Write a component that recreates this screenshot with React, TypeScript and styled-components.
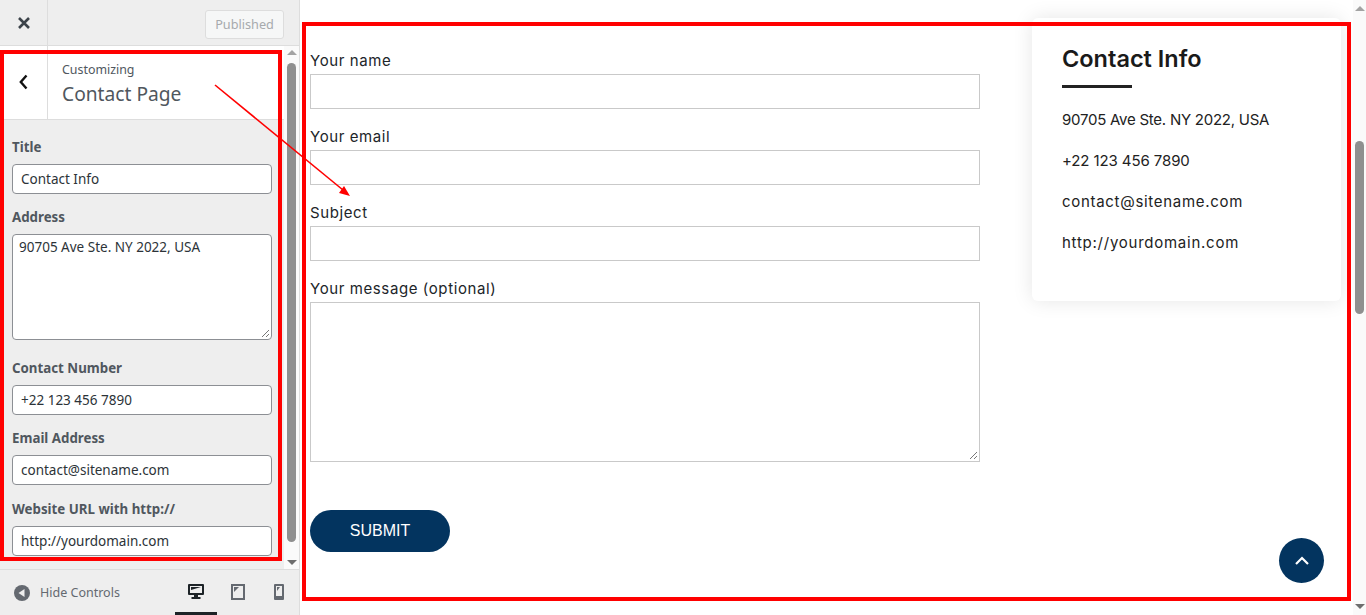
import React from 'react';
import styled, { createGlobalStyle } from 'styled-components';

const GlobalStyle = createGlobalStyle`
  html, body {
    margin: 0;
    padding: 0;
    height: 100%;
    overflow: hidden;
    background: #fff;
  }
  * {
    box-sizing: border-box;
  }
`;

const uiFont = `"Noto Sans", "Liberation Sans", sans-serif`;
const pageFont = `Inter, "Liberation Sans", sans-serif`;
const navy = '#03345f';

const Page = styled.div`
  position: relative;
  display: grid;
  grid-template-columns: 300px 1fr;
  width: 1366px;
  height: 615px;
  overflow: hidden;
`;

const Sidebar = styled.aside`
  display: flex;
  flex-direction: column;
  height: 615px;
  background: #eee;
  border-right: 1px solid #ddd;
  font-family: ${uiFont};
`;

const TopBar = styled.div`
  display: flex;
  align-items: center;
  justify-content: space-between;
  flex: none;
  height: 46px;
  padding-right: 15px;
  border-bottom: 1px solid #ddd;
`;

const IconCell = styled.div<{ $bg?: string; $lift?: number }>`
  display: flex;
  align-items: center;
  justify-content: center;
  flex: none;
  width: 48px;
  height: 100%;
  padding-bottom: ${(p) => p.$lift ?? 0}px;
  border-right: 1px solid #ddd;
  background: ${(p) => p.$bg ?? 'transparent'};
`;

const PublishedButton = styled.div`
  width: 79px;
  height: 29px;
  margin-top: 3px;
  border: 1px solid #ddd;
  border-radius: 3px;
  background: #f6f7f7;
  color: #a7aaad;
  font-size: 12.7px;
  line-height: 27px;
  text-align: center;
`;

const SidebarBody = styled.div`
  display: flex;
  flex: none;
  height: 523px;
`;

const Pane = styled.div`
  flex: 1;
  min-width: 0;
`;

const SectionHead = styled.div`
  display: flex;
  height: 74px;
  background: #fff;
  border-bottom: 1px solid #ddd;
`;

const SectionTitles = styled.div`
  padding: 14.5px 0 0 14px;
  color: #50575e;
`;

const Eyebrow = styled.div`
  font-size: 12.4px;
  line-height: 17px;
`;

const SectionName = styled.div`
  margin-top: 2.5px;
  font-size: 19.2px;
  line-height: 28px;
`;

const Controls = styled.div`
  display: flex;
  flex-direction: column;
  padding: 18px 12px 0;
`;

const Field = styled.div<{ $gap?: number }>`
  margin-bottom: ${(p) => p.$gap ?? 14.2}px;
`;

const FieldLabel = styled.div`
  margin-bottom: 7px;
  color: #50575e;
  font-size: 13.3px;
  font-weight: 700;
  line-height: 19px;
`;

const TextBox = styled.div<{ $tall?: boolean }>`
  position: relative;
  width: 260px;
  height: ${(p) => (p.$tall ? 106 : 30)}px;
  padding: ${(p) => (p.$tall ? '2px 6px' : '0 8px')};
  border: 1px solid #8c8f94;
  border-radius: 4px;
  background: #fff;
  color: #2c3338;
  font-size: 13.5px;
  line-height: ${(p) => (p.$tall ? 20 : 29)}px;
  white-space: nowrap;
`;

const ResizeGrip = styled.svg`
  position: absolute;
  right: 1px;
  bottom: 1px;
`;

const Track = styled.div<{ $width: number; $bg: string }>`
  display: flex;
  flex-direction: column;
  align-items: center;
  flex: none;
  width: ${(p) => p.$width}px;
  background: ${(p) => p.$bg};
`;

const ArrowUp = styled.div<{ $top: number }>`
  flex: none;
  width: 0;
  height: 0;
  margin-top: ${(p) => p.$top}px;
  border-left: 5px solid transparent;
  border-right: 5px solid transparent;
  border-bottom: 5px solid #a3a3a3;
`;

const ArrowDown = styled.div<{ $bottom: number }>`
  flex: none;
  width: 0;
  height: 0;
  margin-top: auto;
  margin-bottom: ${(p) => p.$bottom}px;
  border-left: 5px solid transparent;
  border-right: 5px solid transparent;
  border-top: 5px solid #6e6e6e;
`;

const Thumb = styled.div<{ $top: number; $height: number }>`
  flex: none;
  width: 9px;
  height: ${(p) => p.$height}px;
  margin-top: ${(p) => p.$top}px;
  border-radius: 5px;
  background: #8f8f8f;
`;

const BottomBar = styled.div`
  display: flex;
  align-items: center;
  flex: 1;
  padding-left: 14px;
  border-top: 1px solid #ddd;
`;

const HideLabel = styled.span`
  margin-left: 10px;
  color: #646970;
  font-size: 12.5px;
`;

const Devices = styled.div`
  display: flex;
  align-self: stretch;
  margin-left: auto;
`;

const DeviceTab = styled.div<{ $active?: boolean }>`
  display: flex;
  align-items: center;
  justify-content: center;
  width: ${(p) => (p.$active ? 42 : 41)}px;
  height: 100%;
  padding-top: 1px;
  border-bottom: 3px solid ${(p) => (p.$active ? '#1d2327' : 'transparent')};
  color: ${(p) => (p.$active ? '#1d2327' : '#646970')};
`;

const Preview = styled.main`
  display: flex;
  height: 615px;
  background: #fff;
  font-family: ${pageFont};
  color: #212529;
`;

const PreviewBody = styled.div`
  display: flex;
  flex: 1;
  min-width: 0;
  padding-left: 10px;
`;

const ContactForm = styled.form`
  flex: none;
  width: 670px;
  padding-top: 51px;
`;

const FormLabel = styled.div`
  margin-bottom: 4px;
  font-size: 15px;
  line-height: 19px;
  letter-spacing: 0.6px;
`;

const FormInput = styled.div<{ $height?: number }>`
  position: relative;
  height: ${(p) => p.$height ?? 35}px;
  margin-bottom: 18px;
  border: 1px solid #c9c9c9;
  background: #fff;
`;

const SubmitButton = styled.button`
  display: block;
  width: 140px;
  height: 42px;
  margin-top: 48px;
  padding: 0;
  border: none;
  border-radius: 21px;
  background: ${navy};
  color: #fff;
  font-family: "Liberation Sans", Arial, sans-serif;
  font-size: 16px;
`;

const InfoCard = styled.section`
  flex: none;
  width: 309px;
  height: 283px;
  margin: 18px 0 0 52px;
  padding: 26px 30px 0;
  border-radius: 6px;
  background: #fff;
  box-shadow: 0 0 20px rgba(0, 0, 0, 0.1);
`;

const CardTitle = styled.h3`
  margin: 0;
  color: #1a1a1a;
  font-size: 23.5px;
  font-weight: 600;
  line-height: 30px;
`;

const CardRule = styled.div`
  width: 70px;
  height: 3px;
  margin: 11px 0 22px;
  background: #222;
`;

const CardLine = styled.p<{ $spacing: number }>`
  margin: 0 0 21px;
  color: #222;
  font-size: 15px;
  line-height: 20px;
  letter-spacing: ${(p) => p.$spacing}px;
`;

const ToTop = styled.div`
  position: absolute;
  left: 1279px;
  top: 538px;
  display: flex;
  align-items: center;
  justify-content: center;
  width: 45px;
  height: 45px;
  border-radius: 50%;
  background: ${navy};
`;

const RedBox = styled.div<{ $x: number; $y: number; $w: number; $h: number }>`
  position: absolute;
  left: ${(p) => p.$x}px;
  top: ${(p) => p.$y}px;
  width: ${(p) => p.$w}px;
  height: ${(p) => p.$h}px;
  border: 4px solid #f00;
  pointer-events: none;
`;

const ArrowOverlay = styled.svg`
  position: absolute;
  left: 0;
  top: 0;
  pointer-events: none;
`;

const CloseIcon = () => (
  <svg width="14" height="14" viewBox="0 0 14 14">
    <path d="M2 2l10 10M12 2L2 12" stroke="#3c434a" strokeWidth="2.6" fill="none" />
  </svg>
);

const BackIcon = () => (
  <svg width="9" height="16" viewBox="0 0 9 16">
    <path d="M7.5 1.5L1.8 8l5.7 6.5" stroke="#111" strokeWidth="2.4" fill="none" />
  </svg>
);

const HideIcon = () => (
  <svg width="16" height="16" viewBox="0 0 16 16">
    <circle cx="8" cy="8" r="8" fill="#646970" />
    <path d="M10.5 4v8L4.5 8z" fill="#eee" />
  </svg>
);

const DesktopIcon = () => (
  <svg width="16" height="16" viewBox="0 0 16 16">
    <path
      fillRule="evenodd"
      d="M1 0h14a1 1 0 0 1 1 1v9a1 1 0 0 1-1 1H10v2h2.5v2h-9v-2H6v-2H1a1 1 0 0 1-1-1V1a1 1 0 0 1 1-1zM2 2v7h12V2z"
      fill="currentColor"
    />
    <path d="M3 3h10L3 6z" fill="currentColor" />
  </svg>
);

const TabletIcon = () => (
  <svg width="14" height="16" viewBox="0 0 14 16">
    <path fillRule="evenodd" d="M0 0h14v16H0zM2 2v12h10V2z" fill="currentColor" />
    <path d="M3 3h5L3 8z" fill="currentColor" />
  </svg>
);

const MobileIcon = () => (
  <svg width="10" height="16" viewBox="0 0 10 16">
    <path
      fillRule="evenodd"
      d="M1 0h8a1 1 0 0 1 1 1v14a1 1 0 0 1-1 1H1a1 1 0 0 1-1-1V1a1 1 0 0 1 1-1zM2 2v10h6V2z"
      fill="currentColor"
    />
    <path d="M3 3h3L3 7z" fill="currentColor" />
  </svg>
);

const contactLines = [
  { text: '90705 Ave Ste. NY 2022, USA', spacing: -0.25 },
  { text: '+22 123 456 7890', spacing: -0.1 },
  { text: 'contact@sitename.com', spacing: 0.7 },
  { text: 'http://yourdomain.com', spacing: 0.75 },
];

export default function App() {
  return (
    <>
      <GlobalStyle />
      <Page>
        <Sidebar>
          <TopBar>
            <IconCell>
              <CloseIcon />
            </IconCell>
            <PublishedButton>Published</PublishedButton>
          </TopBar>
          <SidebarBody>
            <Pane>
              <SectionHead>
                <IconCell $bg="#fff" $lift={1}>
                  <BackIcon />
                </IconCell>
                <SectionTitles>
                  <Eyebrow>Customizing</Eyebrow>
                  <SectionName>Contact Page</SectionName>
                </SectionTitles>
              </SectionHead>
              <Controls>
                <Field>
                  <FieldLabel>Title</FieldLabel>
                  <TextBox>Contact Info</TextBox>
                </Field>
                <Field $gap={19}>
                  <FieldLabel>Address</FieldLabel>
                  <TextBox $tall>
                    90705 Ave Ste. NY 2022, USA
                    <ResizeGrip width="9" height="9" viewBox="0 0 9 9">
                      <path d="M1 8l7-7M5 8l3-3" stroke="#777" fill="none" />
                    </ResizeGrip>
                  </TextBox>
                </Field>
                <Field>
                  <FieldLabel>Contact Number</FieldLabel>
                  <TextBox>+22 123 456 7890</TextBox>
                </Field>
                <Field>
                  <FieldLabel>Email Address</FieldLabel>
                  <TextBox>contact@sitename.com</TextBox>
                </Field>
                <Field $gap={0}>
                  <FieldLabel>Website URL with http://</FieldLabel>
                  <TextBox>http://yourdomain.com</TextBox>
                </Field>
              </Controls>
            </Pane>
            <Track $width={15} $bg="#fafafa">
              <ArrowUp $top={4} />
              <Thumb $top={8} $height={479} />
              <ArrowDown $bottom={4} />
            </Track>
          </SidebarBody>
          <BottomBar>
            <HideIcon />
            <HideLabel>Hide Controls</HideLabel>
            <Devices>
              <DeviceTab $active>
                <DesktopIcon />
              </DeviceTab>
              <DeviceTab>
                <TabletIcon />
              </DeviceTab>
              <DeviceTab>
                <MobileIcon />
              </DeviceTab>
            </Devices>
          </BottomBar>
        </Sidebar>
        <Preview>
          <PreviewBody>
            <ContactForm>
              <FormLabel>Your name</FormLabel>
              <FormInput />
              <FormLabel>Your email</FormLabel>
              <FormInput />
              <FormLabel>Subject</FormLabel>
              <FormInput />
              <FormLabel>Your message (optional)</FormLabel>
              <FormInput $height={160}>
                <ResizeGrip width="9" height="9" viewBox="0 0 9 9">
                  <path d="M1 8l7-7M5 8l3-3" stroke="#777" fill="none" />
                </ResizeGrip>
              </FormInput>
              <SubmitButton type="button">SUBMIT</SubmitButton>
            </ContactForm>
            <InfoCard>
              <CardTitle>Contact Info</CardTitle>
              <CardRule />
              {contactLines.map((line) => (
                <CardLine key={line.text} $spacing={line.spacing}>
                  {line.text}
                </CardLine>
              ))}
            </InfoCard>
          </PreviewBody>
          <Track $width={13} $bg="#fafafa">
            <ArrowUp $top={6} />
            <Thumb $top={130} $height={173} />
            <ArrowDown $bottom={6} />
          </Track>
        </Preview>
        <ToTop>
          <svg width="16" height="10" viewBox="0 0 16 10">
            <path d="M2 8l6-6 6 6" stroke="#fff" strokeWidth="2.2" fill="none" />
          </svg>
        </ToTop>
        <RedBox $x={0} $y={50} $w={282} $h={511} />
        <RedBox $x={302} $y={22} $w={1049} $h={579} />
        <ArrowOverlay width="1366" height="615" viewBox="0 0 1366 615">
          <path d="M215 85L343 190" stroke="#f00" strokeWidth="1.6" fill="none" />
          <path d="M350 196l-11-3 5-7z" fill="#f00" />
        </ArrowOverlay>
      </Page>
    </>
  );
}
